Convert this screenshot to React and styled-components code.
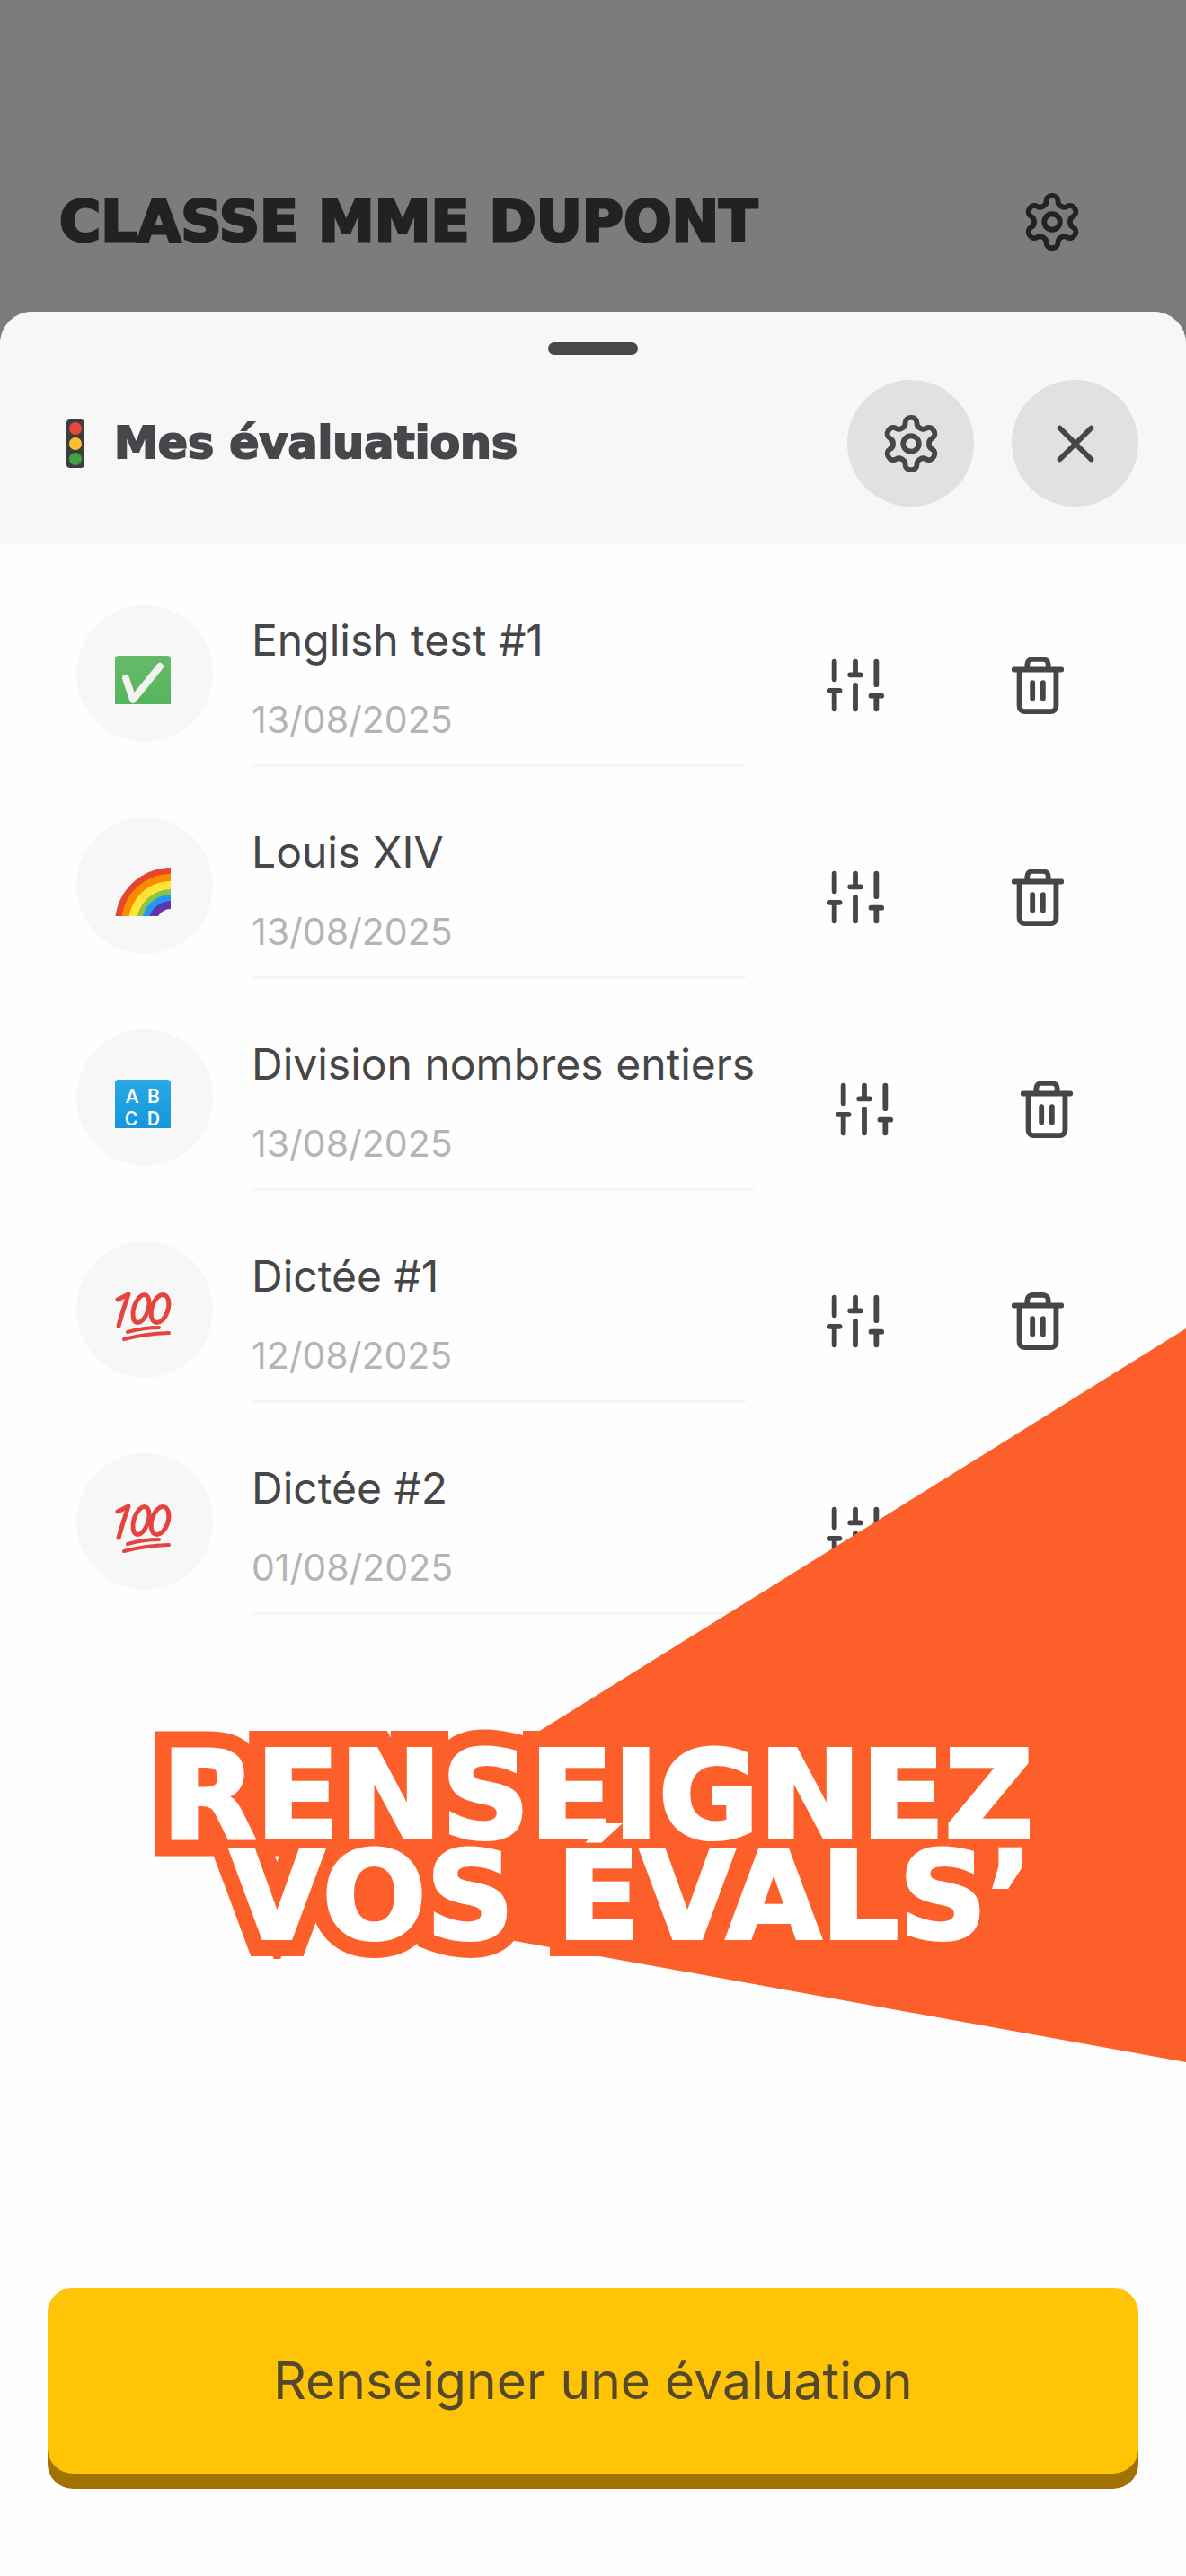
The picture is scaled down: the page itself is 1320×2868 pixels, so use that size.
import React from "react";
import styled, { createGlobalStyle } from "styled-components";

const GlobalStyle = createGlobalStyle`
  *,
  *::before {
    box-sizing: border-box;
  }

  body {
    margin: 0;
    background-color: #7c7c7c;
    font-family: Inter, "Liberation Sans", sans-serif;
  }

  h1,
  h2,
  p,
  ul {
    margin: 0;
    padding: 0;
  }

  svg {
    overflow: visible;
  }
`;

const Page = styled.div`
  min-height: 100vh;
  display: flex;
  flex-direction: column;
`;

const ClassBar = styled.header`
  display: flex;
  align-items: center;
  justify-content: space-between;
  height: 347px;
  padding: 146px 114px 0 66px;
  color: #222222;
`;

const ClassName = styled.h1`
  font-family: "DejaVu Sans", sans-serif;
  font-size: 63px;
  line-height: 72px;
  font-weight: 700;
  -webkit-text-stroke: 3px currentColor;
`;

const Sheet = styled.main`
  position: relative;
  flex: 1;
  display: flex;
  flex-direction: column;
  overflow: hidden;
  border-radius: 36px 36px 0 0;
  background-color: #fefefe;
  color: #464648;
`;

const SheetHeader = styled.div`
  height: 259px;
  padding-top: 34px;
  background-color: #f7f7f8;
`;

const Handle = styled.div`
  width: 100px;
  height: 14px;
  margin: 0 auto 28px;
  border-radius: 7px;
  background-color: #46484b;
`;

const SheetBar = styled.div`
  display: flex;
  align-items: center;
  gap: 42px;
  padding: 0 53px 0 73px;
`;

const SheetTitle = styled.h2`
  flex: 1;
  display: flex;
  align-items: center;
  gap: 32px;
  font-family: "DejaVu Sans", sans-serif;
  font-size: 49px;
  line-height: 56px;
  font-weight: 700;
  -webkit-text-stroke: 2px currentColor;
  color: #46464b;
`;

const IconButton = styled.button`
  flex: none;
  display: flex;
  align-items: center;
  justify-content: center;
  width: ${props => (props.$round ? "141px" : "70px")};
  height: ${props => (props.$round ? "141px" : "70px")};
  padding: 0;
  border: none;
  border-radius: ${props => (props.$round ? "50%" : "0")};
  background-color: ${props => (props.$round ? "#e1e1e2" : "transparent")};
  color: inherit;
`;

const List = styled.ul`
  list-style: none;
  padding: 68px 130px 0 85px;
`;

const Row = styled.li`
  display: flex;
  height: 236px;
`;

const Badge = styled.div`
  flex: none;
  display: flex;
  align-items: center;
  justify-content: center;
  width: 152px;
  height: 152px;
  margin-right: 43px;
  padding: 14px 4px 0 0;
  border-radius: 50%;
  background-color: #f7f7f7;
`;

const Info = styled.div`
  flex: 1 0 auto;
  height: 180px;
  padding-top: 12px;
  border-bottom: 3px solid #f7f7f7;
  white-space: nowrap;
`;

const Name = styled.p`
  font-size: 48px;
  line-height: 54px;
`;

const DateText = styled.p`
  margin-top: 36px;
  font-size: 41px;
  line-height: 50px;
  color: #b4b4b4;
`;

const Actions = styled.div`
  display: flex;
  gap: 133px;
  padding: 54px 0 0 87px;
`;

const Banner = styled.div`
  position: absolute;
  top: 1132px;
  left: 0;
  right: 0;
  height: 817px;
  display: flex;
  align-items: flex-start;
  justify-content: flex-end;
  padding: 464px 170px 0 0;
`;

const Wedge = styled.div`
  position: absolute;
  top: 0;
  right: 0;
  bottom: 0;
  left: 23%;
  background-color: #fc5f2a;
  clip-path: polygon(0 77.5%, 100% 0, 100% 100%);
`;

// The outline is a second copy under the text, so it never covers the other line.
// Its clip trims the sharp corner that the stroke makes below the V.
const Slogan = styled.p`
  position: relative;
  z-index: 1;
  font-family: "DejaVu Sans", sans-serif;
  font-size: 136px;
  line-height: 112px;
  font-weight: 700;
  text-align: right;
  white-space: pre;
  color: #ffffff;
  -webkit-text-stroke: 4px currentColor;

  &::before {
    content: attr(data-text);
    position: absolute;
    inset: 0;
    z-index: -1;
    color: #fc5f2a;
    -webkit-text-stroke: 40px currentColor;
    clip-path: inset(-40px -40px -14px);
  }
`;

const Footer = styled.footer`
  margin-top: auto;
  padding: 0 53px 114px;
`;

const PrimaryButton = styled.button`
  width: 100%;
  height: 207px;
  padding: 0;
  border: none;
  border-radius: 28px;
  background-color: #fec405;
  box-shadow: 0 17px 0 #a17203;
  color: #54482d;
  font-family: inherit;
  font-size: 57px;
`;

const Icon = ({ children }) => (
  <svg
    width="70"
    height="70"
    viewBox="0 0 24 24"
    fill="none"
    stroke="currentColor"
    strokeWidth="2"
    strokeLinecap="round"
    strokeLinejoin="round"
    aria-hidden="true"
  >
    {children}
  </svg>
);

const GearIcon = () => (
  <Icon>
    <path d="M12.22 2h-.44a2 2 0 0 0-2 2v.18a2 2 0 0 1-1 1.73l-.43.25a2 2 0 0 1-2 0l-.15-.08a2 2 0 0 0-2.73.73l-.22.38a2 2 0 0 0 .73 2.73l.15.1a2 2 0 0 1 1 1.72v.51a2 2 0 0 1-1 1.74l-.15.09a2 2 0 0 0-.73 2.73l.22.38a2 2 0 0 0 2.73.73l.15-.08a2 2 0 0 1 2 0l.43.25a2 2 0 0 1 1 1.73V20a2 2 0 0 0 2 2h.44a2 2 0 0 0 2-2v-.18a2 2 0 0 1 1-1.73l.43-.25a2 2 0 0 1 2 0l.15.08a2 2 0 0 0 2.73-.73l.22-.39a2 2 0 0 0-.73-2.73l-.15-.08a2 2 0 0 1-1-1.74v-.5a2 2 0 0 1 1-1.74l.15-.09a2 2 0 0 0 .73-2.73l-.22-.38a2 2 0 0 0-2.73-.73l-.15.08a2 2 0 0 1-2 0l-.43-.25a2 2 0 0 1-1-1.73V4a2 2 0 0 0-2-2z" />
    <circle cx="12" cy="12" r="3" />
  </Icon>
);

const CloseIcon = () => (
  <Icon>
    <path d="M18 6 6 18M6 6l12 12" />
  </Icon>
);

const SlidersIcon = () => (
  <Icon>
    <path d="M4 3v6.7M4 14v7M2 14h4M12 3v5M12 12v9M10 8h4M20 3v8.7M20 16v5M18 16h4" />
  </Icon>
);

const TrashIcon = () => (
  <Icon>
    <path d="M3 6h18M19 6v14a2 2 0 0 1-2 2H7a2 2 0 0 1-2-2V6M8 6V4a2 2 0 0 1 2-2h4a2 2 0 0 1 2 2v2M10 11v6M14 11v6" />
  </Icon>
);

const TrafficLight = () => (
  <svg width="22" height="54" viewBox="0 0 22 54" aria-hidden="true">
    <rect x="1" width="20" height="54" rx="4" fill="#3c3e3e" />
    <circle cx="11" cy="10" r="7" fill="#e8453c" />
    <circle cx="11" cy="27" r="7" fill="#fdc02f" />
    <circle cx="11" cy="44" r="7" fill="#43a047" />
  </svg>
);

const CheckBadge = () => (
  <svg width="62" height="54" viewBox="0 0 62 54" aria-hidden="true">
    <defs>
      <linearGradient id="green" x1="0" y1="0" x2="0" y2="1">
        <stop offset="0" stopColor="#66bb6a" />
        <stop offset="1" stopColor="#56b45b" />
      </linearGradient>
    </defs>
    <path d="M0 54V4a4 4 0 0 1 4-4h54a4 4 0 0 1 4 4v50z" fill="url(#green)" />
    <path d="M12 25l8 24 30-37" fill="none" stroke="#f1f3f1" strokeWidth="8" strokeLinecap="round" strokeLinejoin="round" />
  </svg>
);

const bands = [
  ["#e8452f", 62],
  ["#fb8c00", 55],
  ["#ffe435", 47],
  ["#8bc34a", 38],
  ["#2196f3", 32],
  ["#5e35b1", 25],
  ["#f7f7f7", 16]
];

// Quarter arcs, cut at the right and bottom edge of the tile
const RainbowBadge = () => (
  <svg width="62" height="54" viewBox="0 0 62 54" aria-hidden="true">
    <defs>
      <clipPath id="tile">
        <rect width="62" height="54" />
      </clipPath>
    </defs>
    <g clipPath="url(#tile)">
      {bands.map(([color, r]) => (
        <circle key={color} cx="62" cy="62" r={r} fill={color} />
      ))}
    </g>
  </svg>
);

const LettersBadge = () => (
  <svg width="62" height="54" viewBox="0 0 62 54" aria-hidden="true">
    <defs>
      <linearGradient id="blue" x1="0" y1="0" x2="0" y2="1">
        <stop offset="0" stopColor="#29aae6" />
        <stop offset="1" stopColor="#1496da" />
      </linearGradient>
    </defs>
    <path d="M0 54V4a4 4 0 0 1 4-4h54a4 4 0 0 1 4 4v50z" fill="url(#blue)" />
    <g fill="#ffffff" fontFamily="Roboto, sans-serif" fontSize="22" fontWeight="500" textAnchor="middle">
      <text x="19" y="26">A</text>
      <text x="43" y="26">B</text>
      <text x="18" y="51">C</text>
      <text x="43" y="51">D</text>
    </g>
  </svg>
);

const HundredBadge = () => (
  <svg width="62" height="54" viewBox="0 0 62 54" aria-hidden="true">
    <g fill="none" stroke="#e5433b" strokeWidth="5" strokeLinecap="round" strokeLinejoin="round">
      <path d="M3 9L15 3Q9 20 4 38" />
      <ellipse cx="29" cy="19" rx="8" ry="16" transform="rotate(18 29 19)" />
      <ellipse cx="50" cy="19" rx="9" ry="16" transform="rotate(18 50 19)" />
      <path d="M14 45Q32 40 49 40M10 53Q32 47 60 46" strokeWidth="4" />
    </g>
  </svg>
);

const evaluations = [
  { name: "English test #1", date: "13/08/2025", badge: <CheckBadge /> },
  { name: "Louis XIV", date: "13/08/2025", badge: <RainbowBadge /> },
  { name: "Division nombres entiers", date: "13/08/2025", badge: <LettersBadge /> },
  { name: "Dictée #1", date: "12/08/2025", badge: <HundredBadge /> },
  { name: "Dictée #2", date: "01/08/2025", badge: <HundredBadge /> }
];

const Evaluation = props => {
  const { name, date, badge } = props;
  return (
    <Row>
      <Badge>{badge}</Badge>
      <Info>
        <Name>{name}</Name>
        <DateText>{date}</DateText>
      </Info>
      <Actions>
        <IconButton aria-label={`Régler ${name}`}>
          <SlidersIcon />
        </IconButton>
        <IconButton aria-label={`Supprimer ${name}`}>
          <TrashIcon />
        </IconButton>
      </Actions>
    </Row>
  );
};

const slogan = "RENSEIGNEZ\nVOS ÉVALS’";

const App = () => {
  return (
    <Page>
      <GlobalStyle />
      <ClassBar>
        <ClassName>CLASSE MME DUPONT</ClassName>
        <IconButton aria-label="Réglages de la classe">
          <GearIcon />
        </IconButton>
      </ClassBar>
      <Sheet>
        <SheetHeader>
          <Handle />
          <SheetBar>
            <SheetTitle>
              <TrafficLight />
              Mes évaluations
            </SheetTitle>
            <IconButton $round aria-label="Réglages">
              <GearIcon />
            </IconButton>
            <IconButton $round aria-label="Fermer">
              <CloseIcon />
            </IconButton>
          </SheetBar>
        </SheetHeader>
        <List>
          {evaluations.map(evaluation => (
            <Evaluation key={evaluation.name} {...evaluation} />
          ))}
        </List>
        <Banner>
          <Wedge />
          <Slogan data-text={slogan}>{slogan}</Slogan>
        </Banner>
        <Footer>
          <PrimaryButton>Renseigner une évaluation</PrimaryButton>
        </Footer>
      </Sheet>
    </Page>
  );
};

export default App;
